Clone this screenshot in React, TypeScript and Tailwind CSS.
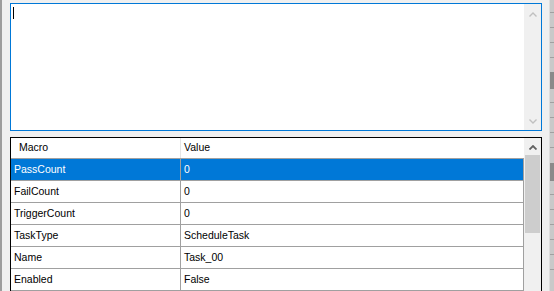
import React from "react";

const rows = [
  { macro: "PassCount", value: "0", selected: true },
  { macro: "FailCount", value: "0" },
  { macro: "TriggerCount", value: "0" },
  { macro: "TaskType", value: "ScheduleTask" },
  { macro: "Name", value: "Task_00" },
  { macro: "Enabled", value: "False" },
];

const Chevron = ({ up, color, width }: { up: boolean; color: string; width: number }) => (
  <svg width="8" height="5" viewBox="0 0 8 5">
    <polyline
      points={up ? "0.5,4.5 4,1 7.5,4.5" : "0.5,0.5 4,4 7.5,0.5"}
      fill="none"
      stroke={color}
      strokeWidth={width}
    />
  </svg>
);

const Tick = () => <div className="h-[15px] border-b border-[#a0a0a0]" />;

export default function App() {
  return (
    <div className="flex h-[291px] w-[554px] overflow-hidden bg-[#f0f0f0] font-['Liberation_Sans',Arial,sans-serif] text-[10.5px] text-black">
      {/* left edge */}
      <div className="w-[2px] bg-[#9d9d9d]" />

      <div className="ml-[8px] flex w-[532px] flex-col pt-[3px]">
        {/* text box */}
        <div className="flex h-[128px] border border-[#0078d7] bg-white">
          <div className="flex-1 pl-[2px] pt-[3px]">
            <div className="h-[12px] w-px bg-black" />
          </div>
          <div className="flex w-[17px] flex-col items-center justify-between bg-[#f0f0f0] pb-[6px] pt-[8px]">
            <Chevron up color="#c0c0c0" width={1.4} />
            <Chevron up={false} color="#c0c0c0" width={1.4} />
          </div>
        </div>

        {/* macro grid */}
        <div className="mt-[6px] flex flex-1 border-l border-r border-t border-black bg-white">
          <div className="flex w-[513px] flex-col">
            <div className="flex h-[21px] border-b border-[#a0a0a0]">
              <div className="flex w-[170px] items-center border-r border-[#e5e5e5] pl-[8px]">
                Macro
              </div>
              <div className="flex flex-1 items-center pl-[3px]">Value</div>
            </div>
            {rows.map((r) => (
              <div
                key={r.macro}
                className={
                  r.selected
                    ? "flex h-[22px] border-b border-r border-[#a0a0a0] bg-[#0078d7] text-white"
                    : "flex h-[22px] border-b border-r border-[#a0a0a0]"
                }
              >
                <div className="flex w-[170px] items-center border-r border-[#a0a0a0] pl-[3px]">
                  {r.macro}
                </div>
                <div className="flex flex-1 items-center pl-[3px]">{r.value}</div>
              </div>
            ))}
          </div>
          <div className="flex w-[17px] flex-col bg-[#f0f0f0]">
            <div className="flex h-[17px] items-center justify-center pt-px">
              <Chevron up color="#606060" width={1.8} />
            </div>
            <div className="mx-px h-[78px] bg-[#cdcdcd]" />
          </div>
        </div>
      </div>

      {/* right edge strip */}
      <div className="ml-[7px] flex w-[5px] flex-col border-l border-[#dedede] bg-[#c9c9c9]">
        <div className="h-[13px] border-b border-[#a0a0a0]" />
        <Tick />
        <Tick />
        <Tick />
        <div className="h-[14px]" />
        <div className="h-[17px] bg-[#8a8a8a]" />
        <div className="h-[14px] border-b border-[#a0a0a0]" />
        <Tick />
        <Tick />
        <Tick />
        <div className="h-[15px]" />
        <div className="h-[18px] bg-[#8a8a8a]" />
        <div className="h-[14px] border-b border-[#a0a0a0]" />
        <Tick />
        <Tick />
        <Tick />
        <Tick />
        <Tick />
      </div>
    </div>
  );
}
